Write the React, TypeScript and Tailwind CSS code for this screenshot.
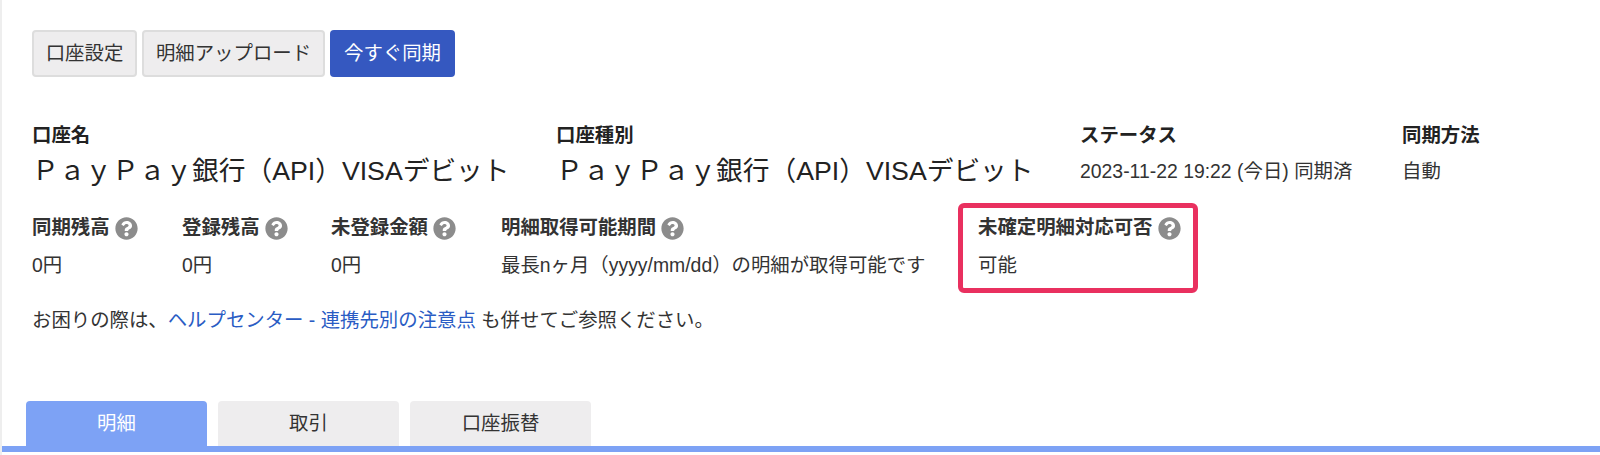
import { FaQuestionCircle } from "react-icons/fa"

const font = "font-['Liberation_Sans','Noto_Sans_CJK_JP',sans-serif]"

function Help() {
  return <FaQuestionCircle className="ml-[5px] h-[23px] w-[23px] text-[#8c8c8c]" />
}

function Stat({ label, value, width }: { label: string; value: string; width: string }) {
  return (
    <div className={`${width} shrink-0`}>
      <div className="flex h-[24px] items-center font-bold text-[#333]">
        {label}
        <Help />
      </div>
      <div className="mt-[13px] h-[24px] leading-[24px] text-[#333]">{value}</div>
    </div>
  )
}

export default function App() {
  return (
    <div className={`${font} flex h-[455px] w-[1600px] flex-col overflow-hidden border-l-2 border-[#eeeeee] bg-white text-[19.4px]`}>
      <div className="flex gap-[5px] pl-[30px] pt-[30px]">
        <button className="h-[47px] w-[105px] rounded-[4px] border-2 border-[#dddddd] bg-[#eeedee] text-[#333]">口座設定</button>
        <button className="h-[47px] w-[183px] rounded-[4px] border-2 border-[#dddddd] bg-[#eeedee] text-[#333]">明細アップロード</button>
        <button className="h-[47px] w-[125px] rounded-[4px] bg-[#3558c0] text-white">今すぐ同期</button>
      </div>

      <div className="mt-[46px] flex pl-[30px]">
        <div className="w-[524px] shrink-0">
          <div className="h-[24px] leading-[24px] font-bold text-[#222]">口座名</div>
          <div className="mt-[7px] h-[38px] text-[26.7px] leading-[35px] text-[#222]">ＰａｙＰａｙ銀行（API）VISAデビット</div>
        </div>
        <div className="w-[524px] shrink-0">
          <div className="h-[24px] leading-[24px] font-bold text-[#222]">口座種別</div>
          <div className="mt-[7px] h-[38px] text-[26.7px] leading-[35px] text-[#222]">ＰａｙＰａｙ銀行（API）VISAデビット</div>
        </div>
        <div className="w-[322px] shrink-0">
          <div className="h-[24px] leading-[24px] font-bold text-[#222]">ステータス</div>
          <div className="mt-[7px] h-[38px] leading-[35px] text-[#333]">2023-11-22 19:22 (今日) 同期済</div>
        </div>
        <div className="shrink-0">
          <div className="h-[24px] leading-[24px] font-bold text-[#222]">同期方法</div>
          <div className="mt-[7px] h-[38px] leading-[35px] text-[#333]">自動</div>
        </div>
      </div>

      <div className="mt-[11px] flex pl-[30px]">
        <div className="flex pt-[13px]">
          <Stat label="同期残高" value="0円" width="w-[150px]" />
          <Stat label="登録残高" value="0円" width="w-[149px]" />
          <Stat label="未登録金額" value="0円" width="w-[170px]" />
          <Stat label="明細取得可能期間" value="最長nヶ月（yyyy/mm/dd）の明細が取得可能です" width="w-[457px]" />
        </div>
        <div className="h-[90px] w-[240px] shrink-0 rounded-[6px] border-[5px] border-[#e9305f] pl-[15px] pt-[8px]">
          <Stat label="未確定明細対応可否" value="可能" width="w-full" />
        </div>
      </div>

      <div className="mt-[14px] pl-[30px] leading-[26px] text-[#333]">
        お困りの際は、<span className="text-[#2a5cc4]">ヘルプセンター - 連携先別の注意点</span> も併せてご参照ください。
      </div>

      <div className="mt-auto">
        <div className="flex gap-[11px] pl-[24px]">
          <div className="flex h-[45px] w-[181px] items-center justify-center rounded-t-[4px] bg-[#7da2f5] text-white">明細</div>
          <div className="flex h-[45px] w-[181px] items-center justify-center rounded-t-[4px] bg-[#eeedee] text-[#333]">取引</div>
          <div className="flex h-[45px] w-[181px] items-center justify-center rounded-t-[4px] bg-[#eeedee] text-[#333]">口座振替</div>
        </div>
        <div className="mb-[3px] h-[6px] bg-[#7da2f5]" />
      </div>
    </div>
  )
}
